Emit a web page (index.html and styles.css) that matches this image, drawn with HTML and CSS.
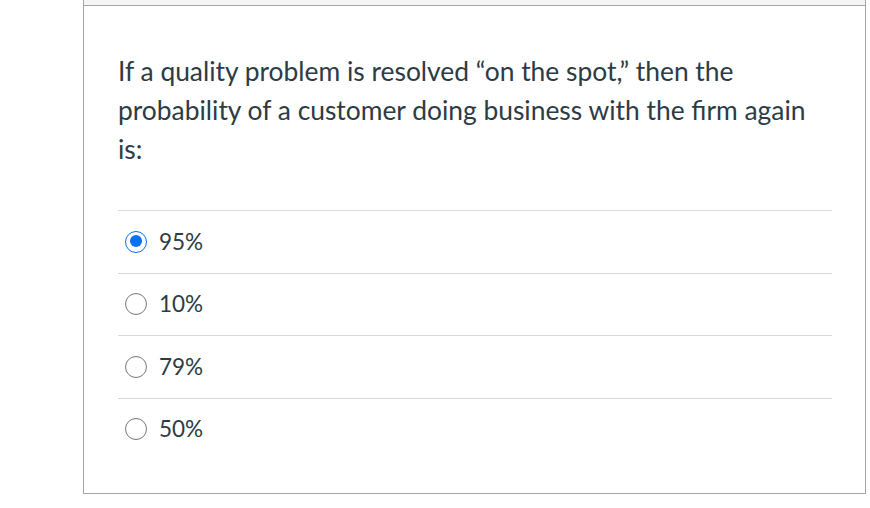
FILE: index.html
```html
<!DOCTYPE html>
<html>
<head>
<meta charset="utf-8">
<link rel="stylesheet" href="styles.css">
</head>
<body>
<div class="card">
  <div class="card-head"></div>
  <div class="card-body">
    <p class="question">If a quality problem is resolved “on the spot,” then the probability of a customer doing business with the ﬁrm again is:</p>
    <div class="answers">
      <label class="answer"><span class="radio checked"></span><span class="answer-text">95%</span></label>
      <label class="answer"><span class="radio"></span><span class="answer-text">10%</span></label>
      <label class="answer"><span class="radio"></span><span class="answer-text">79%</span></label>
      <label class="answer"><span class="radio"></span><span class="answer-text">50%</span></label>
    </div>
  </div>
</div>
</body>
</html>
```

FILE: styles.css
```css
html, body {
  margin: 0;
  padding: 0;
  background: #ffffff;
}
body {
  font-family: Lato, "Noto Sans", sans-serif;
  color: #2d3b45;
}
.card {
  margin-left: 83px;
  width: 781px;
  height: 493px;
  border-left: 1px solid #a5a5a5;
  border-right: 1px solid #a5a5a5;
  border-bottom: 1px solid #a5a5a5;
  box-sizing: content-box;
  display: flex;
  flex-direction: column;
}
.card-head {
  height: 5px;
  background: #f5f5f5;
  border-bottom: 1px solid #a5a5a5;
}
.card-body {
  padding: 0 33px 0 34px;
}
.question {
  margin: 46px 0 0 0;
  font-size: 26.4px;
  line-height: 39px;
}
.answers {
  margin-top: 41px;
  display: flex;
  flex-direction: column;
}
.answer {
  display: flex;
  align-items: center;
  border-top: 1px solid #d9d9d9;
  box-sizing: border-box;
  height: 62.5px;
}
.radio {
  width: 22px;
  height: 22px;
  border-radius: 50%;
  border: 1px solid #777777;
  box-sizing: border-box;
  margin-left: 7px;
  margin-right: 12px;
  background: #fff;
  position: relative;
}
.radio.checked {
  border: 1.5px solid #0770f5;
}
.radio.checked::after {
  content: "";
  position: absolute;
  left: 3.5px;
  top: 3.5px;
  width: 12px;
  height: 12px;
  border-radius: 50%;
  background: #0770f5;
}
.answer-text {
  font-size: 22.5px;
  line-height: 26px;
}
```
